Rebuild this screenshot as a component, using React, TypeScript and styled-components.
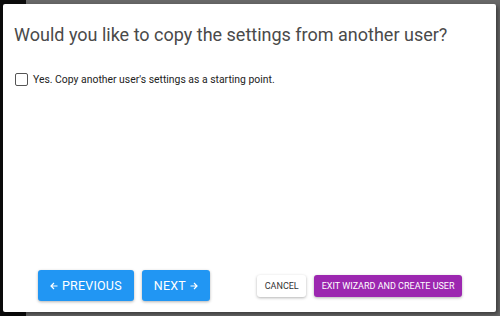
import React, { useState } from 'react';
import styled, { createGlobalStyle } from 'styled-components';

const GlobalStyle = createGlobalStyle`
  html, body {
    margin: 0;
    padding: 0;
    width: 500px;
    height: 316px;
    overflow: hidden;
    font-family: Roboto, 'Liberation Sans', sans-serif;
  }
`;

const Backdrop = styled.div`
  box-sizing: border-box;
  width: 500px;
  height: 316px;
  padding: 4px 4px 4px 3px;
  background: linear-gradient(to right, #0c0c0c 0 26px, #686868 26px);
`;

const Dialog = styled.div`
  box-sizing: border-box;
  width: 493px;
  height: 308px;
  background: #fff;
  border-radius: 2px;
  box-shadow: 2px 2px 4px rgba(0, 0, 0, 0.45);
  display: flex;
  flex-direction: column;
`;

const Title = styled.h2`
  margin: 0;
  padding: 19px 11px 0;
  font-size: 18px;
  font-weight: 400;
  color: #4a4a4a;
  line-height: 24px;
`;

const Content = styled.div`
  flex: 1;
  padding: 26px 12px 0;
`;

const CheckRow = styled.label`
  display: flex;
  align-items: center;
  gap: 5px;
  font-size: 10.4px;
  color: #222;
  cursor: pointer;
`;

const Box = styled.span<{ $checked: boolean }>`
  box-sizing: border-box;
  width: 13px;
  height: 13px;
  border: 1.5px solid #555;
  border-radius: 2px;
  background: ${({ $checked }) => ($checked ? '#2196f3' : '#fff')};
`;

const Actions = styled.div`
  display: flex;
  justify-content: space-between;
  align-items: center;
  padding: 0 34px 11px 35px;
`;

const Group = styled.div`
  display: flex;
  align-items: center;
  gap: 8px;
`;

const Button = styled.button<{ $bg: string; $fg: string; $small?: boolean }>`
  box-sizing: border-box;
  display: inline-flex;
  align-items: center;
  gap: 4px;
  border: none;
  border-radius: 3px;
  background: ${({ $bg }) => $bg};
  color: ${({ $fg }) => $fg};
  font-family: Roboto, 'Liberation Sans', sans-serif;
  font-size: ${({ $small }) => ($small ? '9px' : '12.5px')};
  height: ${({ $small }) => ($small ? '22px' : '31px')};
  padding: ${({ $small }) => ($small ? '0 7.5px' : '0 12px')};
  text-transform: uppercase;
  letter-spacing: ${({ $small }) => ($small ? '0' : '0.2px')};
  box-shadow: 0 1px 3px rgba(0, 0, 0, 0.3);
  cursor: pointer;
`;

const Arrow = ({ dir }: { dir: 'left' | 'right' }) => (
  <svg width="8" height="8" viewBox="0 0 8 8" fill="none" stroke="currentColor" strokeWidth="1.2">
    {dir === 'left' ? (
      <path d="M7.5 4H1M4 1L1 4l3 3" />
    ) : (
      <path d="M0.5 4H7M4 1l3 3-3 3" />
    )}
  </svg>
);

export default function App() {
  const [checked, setChecked] = useState(false);
  return (
    <>
      <GlobalStyle />
      <Backdrop>
        <Dialog>
          <Title>Would you like to copy the settings from another user?</Title>
          <Content>
            <CheckRow onClick={() => setChecked(!checked)}>
              <Box $checked={checked} />
              Yes. Copy another user's settings as a starting point.
            </CheckRow>
          </Content>
          <Actions>
            <Group>
              <Button $bg="#2196f3" $fg="#fff"><Arrow dir="left" />Previous</Button>
              <Button $bg="#2196f3" $fg="#fff">Next<Arrow dir="right" /></Button>
            </Group>
            <Group>
              <Button $bg="#fff" $fg="#333" $small>Cancel</Button>
              <Button $bg="#9c27b0" $fg="#fff" $small>Exit wizard and create user</Button>
            </Group>
          </Actions>
        </Dialog>
      </Backdrop>
    </>
  );
}
